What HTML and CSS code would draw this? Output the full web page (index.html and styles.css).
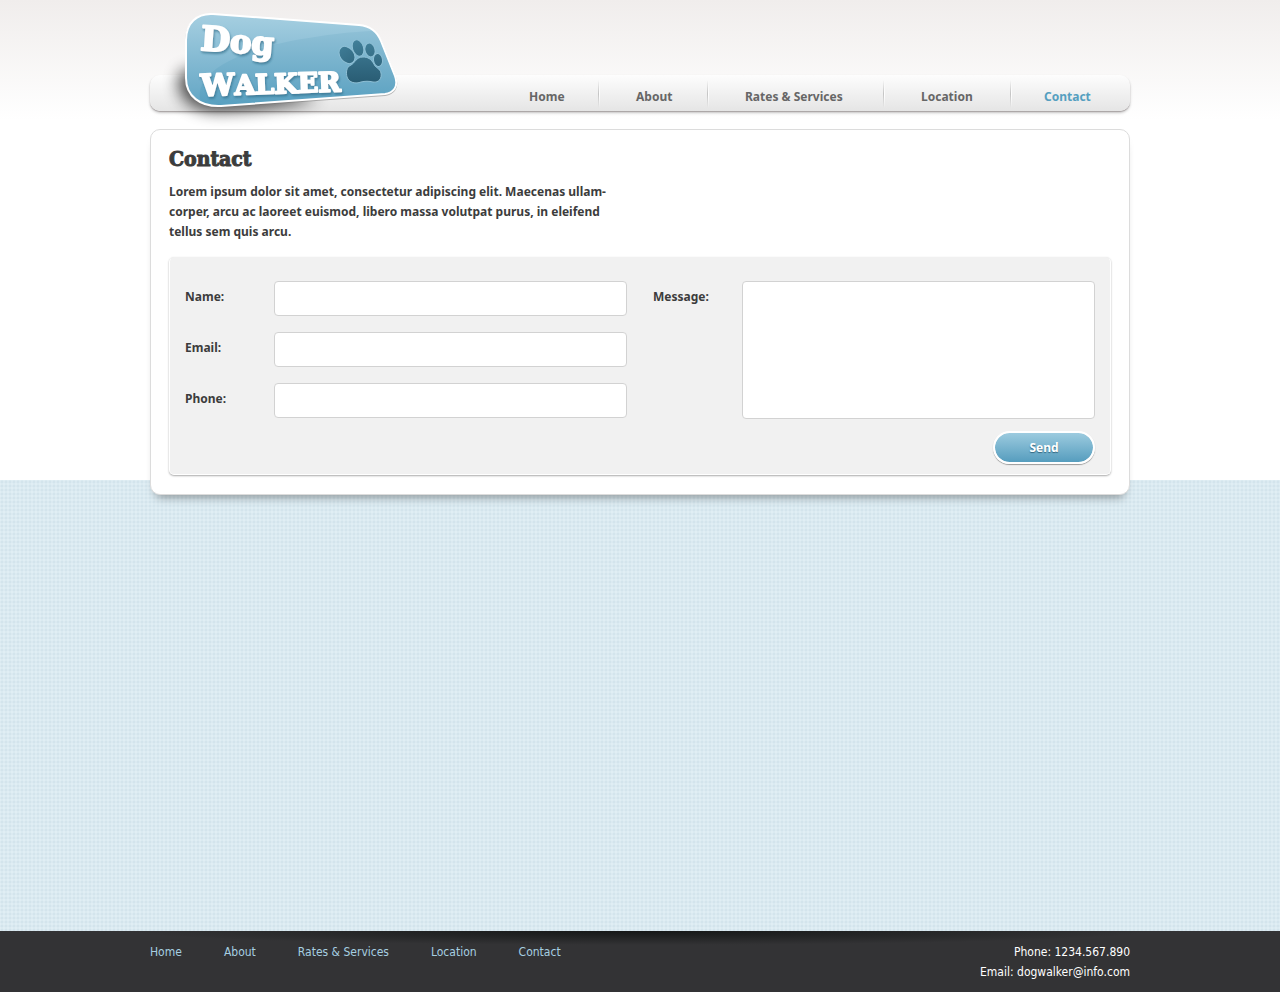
FILE: index.html
```
<!DOCTYPE html>
<html lang="en">
<head>
<meta charset="utf-8">
<meta name="viewport" content="width=device-width, initial-scale=1">
<title>Dog Walker - Contact</title>
<link rel="stylesheet" href="styles.css">
</head>
<body>
<header class="site-header wrap">
  <a class="logo" href="#" aria-label="Dog Walker">
    <svg width="270" height="128" viewBox="140 0 270 128" aria-hidden="true">
      <defs>
        <linearGradient id="badge" x1="0" y1="0" x2="0" y2="1"><stop offset="0" stop-color="#a6cfe1"/><stop offset="1" stop-color="#62a5c4"/></linearGradient>
        <linearGradient id="swoosh" x1="0" y1="0" x2="0" y2="1"><stop offset="0" stop-color="#8fc0d6"/><stop offset="1" stop-color="#559ebf"/></linearGradient>
        <linearGradient id="paw" gradientUnits="userSpaceOnUse" x1="0" y1="40" x2="0" y2="84"><stop offset="0" stop-color="#417f99"/><stop offset="1" stop-color="#285b72"/></linearGradient>
        <filter id="soft" x="-30%" y="-60%" width="160%" height="220%"><feGaussianBlur stdDeviation="8"/></filter>
        <filter id="letter" x="-5%" y="-10%" width="110%" height="130%"><feDropShadow dx="1" dy="2" stdDeviation="1" flood-color="#28627e" flood-opacity=".6"/></filter>
        <clipPath id="badge-clip"><path d="M186 40C186 23 197 13 213 14L359 25C370 26 377 31 381 41L395 76C399 87 393 93 385 94L221 106C200 107 186 96 186 78Z"/></clipPath>
      </defs>
      <path d="M180 74C188 66 200 70 210 74L300 94 320 99C280 107 240 111 215 111 186 109 174 92 180 74Z" fill="#000" opacity=".7" filter="url(#soft)"/>
      <path d="M186 40C186 23 197 13 213 14L359 25C370 26 377 31 381 41L395 76C399 87 393 93 385 94L221 106C200 107 186 96 186 78Z" transform="translate(0 1)" fill="#777" opacity=".5" stroke="#777" stroke-width="2"/>
      <path d="M186 40C186 23 197 13 213 14L359 25C370 26 377 31 381 41L395 76C399 87 393 93 385 94L221 106C200 107 186 96 186 78Z" fill="url(#badge)"/>
      <path d="M200 99C195 68 250 46 315 37 345 32 370 31 400 30V110H215Q204 107 200 99Z" fill="url(#swoosh)" clip-path="url(#badge-clip)"/>
      <path d="M186 40C186 23 197 13 213 14L359 25C370 26 377 31 381 41L395 76C399 87 393 93 385 94L221 106C200 107 186 96 186 78Z" fill="none" stroke="#fff" stroke-width="2"/>
      <g fill="url(#paw)" stroke="#8fc0d6" stroke-width="1">
        <ellipse cx="347" cy="55" rx="7" ry="9.500" transform="rotate(-38 347 55)"/>
        <ellipse cx="358" cy="48" rx="5.500" ry="8.500" transform="rotate(-18 358 48)"/>
        <ellipse cx="370" cy="50" rx="5" ry="7" transform="rotate(-14 370 50)"/>
        <ellipse cx="378" cy="60" rx="4.500" ry="6.500" transform="rotate(-8 378 60)"/>
        <path d="M363 57C356 57 355 63 351 65 346 67 346 73 347 77 349 83 356 84 361 82 365 81 369 81 373 82 379 83 382 78 381 73 380 68 375 68 374 64 371 59 368 57 363 57Z"/>
      </g>
      <g class="logo-text" filter="url(#letter)">
        <text x="200" y="50" transform="rotate(4 200 50)"><tspan font-size="34">D</tspan><tspan font-size="32">og</tspan></text>
        <text x="201" y="96" transform="rotate(-2 201 96)"><tspan font-size="30">W</tspan><tspan font-size="27">ALKER</tspan></text>
      </g>
    </svg>
  </a>
  <nav class="main-nav" aria-label="Main">
    <ul>
      <li class="w-home"><a href="#">Home</a></li>
      <li class="w-about"><a href="#">About</a></li>
      <li class="w-rates"><a href="#">Rates &amp; Services</a></li>
      <li class="w-location"><a href="#">Location</a></li>
      <li class="w-contact"><a href="#" aria-current="page">Contact</a></li>
    </ul>
  </nav>
</header>
<main class="wrap card">
  <h1>Contact</h1>
  <p class="intro">Lorem ipsum dolor sit amet, consectetur adipiscing elit. Maecenas ullam-<br>corper, arcu ac laoreet euismod, libero massa volutpat purus, in eleifend<br>tellus sem quis arcu.</p>
  <form class="contact-form">
    <div class="column">
      <div class="field"><label for="name">Name:</label><input id="name" type="text"></div>
      <div class="field"><label for="email">Email:</label><input id="email" type="email"></div>
      <div class="field"><label for="phone">Phone:</label><input id="phone" type="tel"></div>
    </div>
    <div class="column message">
      <div class="field"><label for="message">Message:</label><textarea id="message"></textarea></div>
      <button type="submit">Send</button>
    </div>
  </form>
</main>
<footer class="site-footer">
  <div class="wrap footer-inner">
    <nav aria-label="Footer">
      <ul>
        <li><a href="#">Home</a></li>
        <li><a href="#">About</a></li>
        <li><a href="#">Rates &amp; Services</a></li>
        <li><a href="#">Location</a></li>
        <li><a href="#">Contact</a></li>
      </ul>
    </nav>
    <address>Phone: 1234.567.890<br>Email: dogwalker@info.com</address>
  </div>
</footer>
</body>
</html>
```
FILE: styles.css
```
* { box-sizing: border-box; }
body {
  margin: 0;
  min-height: 100vh;
  display: flex;
  flex-direction: column;
  font: 12px/20px "Noto Sans", Tahoma, sans-serif;
  color: #3c3c3c;
  background:
    linear-gradient(#f0edec, #fff 120px) 0 0 / 100% 480px no-repeat,
    radial-gradient(circle at 2px 2px, #d3e4ec 1px, #e0eef4 2px) 0 0 / 4px 4px;
}
ul { margin: 0; padding: 0; list-style: none; display: flex; }
a { color: inherit; text-decoration: none; }
.wrap { width: 100%; max-width: 980px; margin: 0 auto; }

.site-header { position: relative; padding-top: 75px; }
.logo { position: absolute; left: -10px; top: 0; }
.logo svg { display: block; }
.logo-text {
  font-family: "DejaVu Serif", serif;
  font-weight: bold;
  fill: #fff;
  stroke: #fff;
  stroke-width: 2px;
  stroke-linejoin: round;
}
.main-nav {
  height: 36px;
  border-radius: 10px;
  background: linear-gradient(#fdfdfd, #e5e5e5);
  box-shadow: 0 1px 1px #a9a3a4, 0 2px 3px #c8c8c8;
  font-weight: bold;
  color: #666;
}
.main-nav ul { height: 100%; justify-content: flex-end; align-items: center; }
.main-nav li { padding: 6px 0 0 38px; height: 36px; line-height: 32px; white-space: nowrap; }
.main-nav li + li {
  background: linear-gradient(#fff0, #c4c4c4 50%, #fff0) 0 5px / 1px 28px no-repeat,
    linear-gradient(#fff0, #fff 50%, #fff0) 1px 5px / 1px 28px no-repeat;
}
.w-home { width: 107px; }
.w-about { width: 109px; }
.w-rates { width: 176px; }
.w-location { width: 127px; }
.main-nav .w-contact { width: 120px; padding-left: 34px; }
.main-nav [aria-current] { color: #559fc0; }

.card {
  margin-top: 18px;
  padding: 18px 18px 19px;
  border: 1px solid #dcdcdc;
  border-radius: 10px;
  background: #fff;
  box-shadow: 0 8px 10px -6px #0006;
}
h1 {
  margin: 0;
  font: bold 21px/22px "DejaVu Serif Condensed", "DejaVu Serif", serif;
  -webkit-text-stroke: 1px #3c3c3c;
}
.intro { margin: 12px 0 15px; font-weight: bold; }
.contact-form {
  display: flex;
  gap: 26px;
  padding: 23px 15px 10px;
  border: 1px solid #fff;
  border-top-color: #f1f1f1;
  border-radius: 5px;
  background: #f1f1f1;
  box-shadow: 0 1px 2px #aaa;
}
.column { flex: 1; display: flex; flex-direction: column; gap: 16px; }
.message { gap: 12px; }
.field { display: flex; align-items: flex-start; }
.field label { width: 89px; padding-top: 6px; font-weight: bold; }
.field input, .field textarea {
  flex: 1;
  min-width: 0;
  height: 35px;
  margin: 0;
  padding: 6px 8px;
  border: 1px solid #d2d2d2;
  border-radius: 4px;
  background: #fff;
  font: inherit;
}
.field textarea { height: 138px; resize: none; }
button {
  align-self: flex-end;
  width: 102px;
  height: 33px;
  padding: 0;
  border: 2px solid #fff;
  border-radius: 17px;
  background: linear-gradient(#9ccbdf, #569dbe) padding-box;
  box-shadow: 0 1px 1px #999;
  color: #fff;
  font: bold 12px/20px "Noto Sans", Tahoma, sans-serif;
  text-shadow: 0 1px 1px #33667f;
}

.site-footer {
  margin-top: auto;
  padding: 11px 0 10px;
  background: radial-gradient(ellipse 40% 14px at 50% 0, #151717, #333335) #333335;
  color: #fff;
  font-family: "DejaVu Sans Condensed", Tahoma, sans-serif;
}
.footer-inner { display: flex; justify-content: space-between; }
.site-footer ul { gap: 42px; color: #a6cfe1; }
address { font-style: normal; text-align: right; }
```
